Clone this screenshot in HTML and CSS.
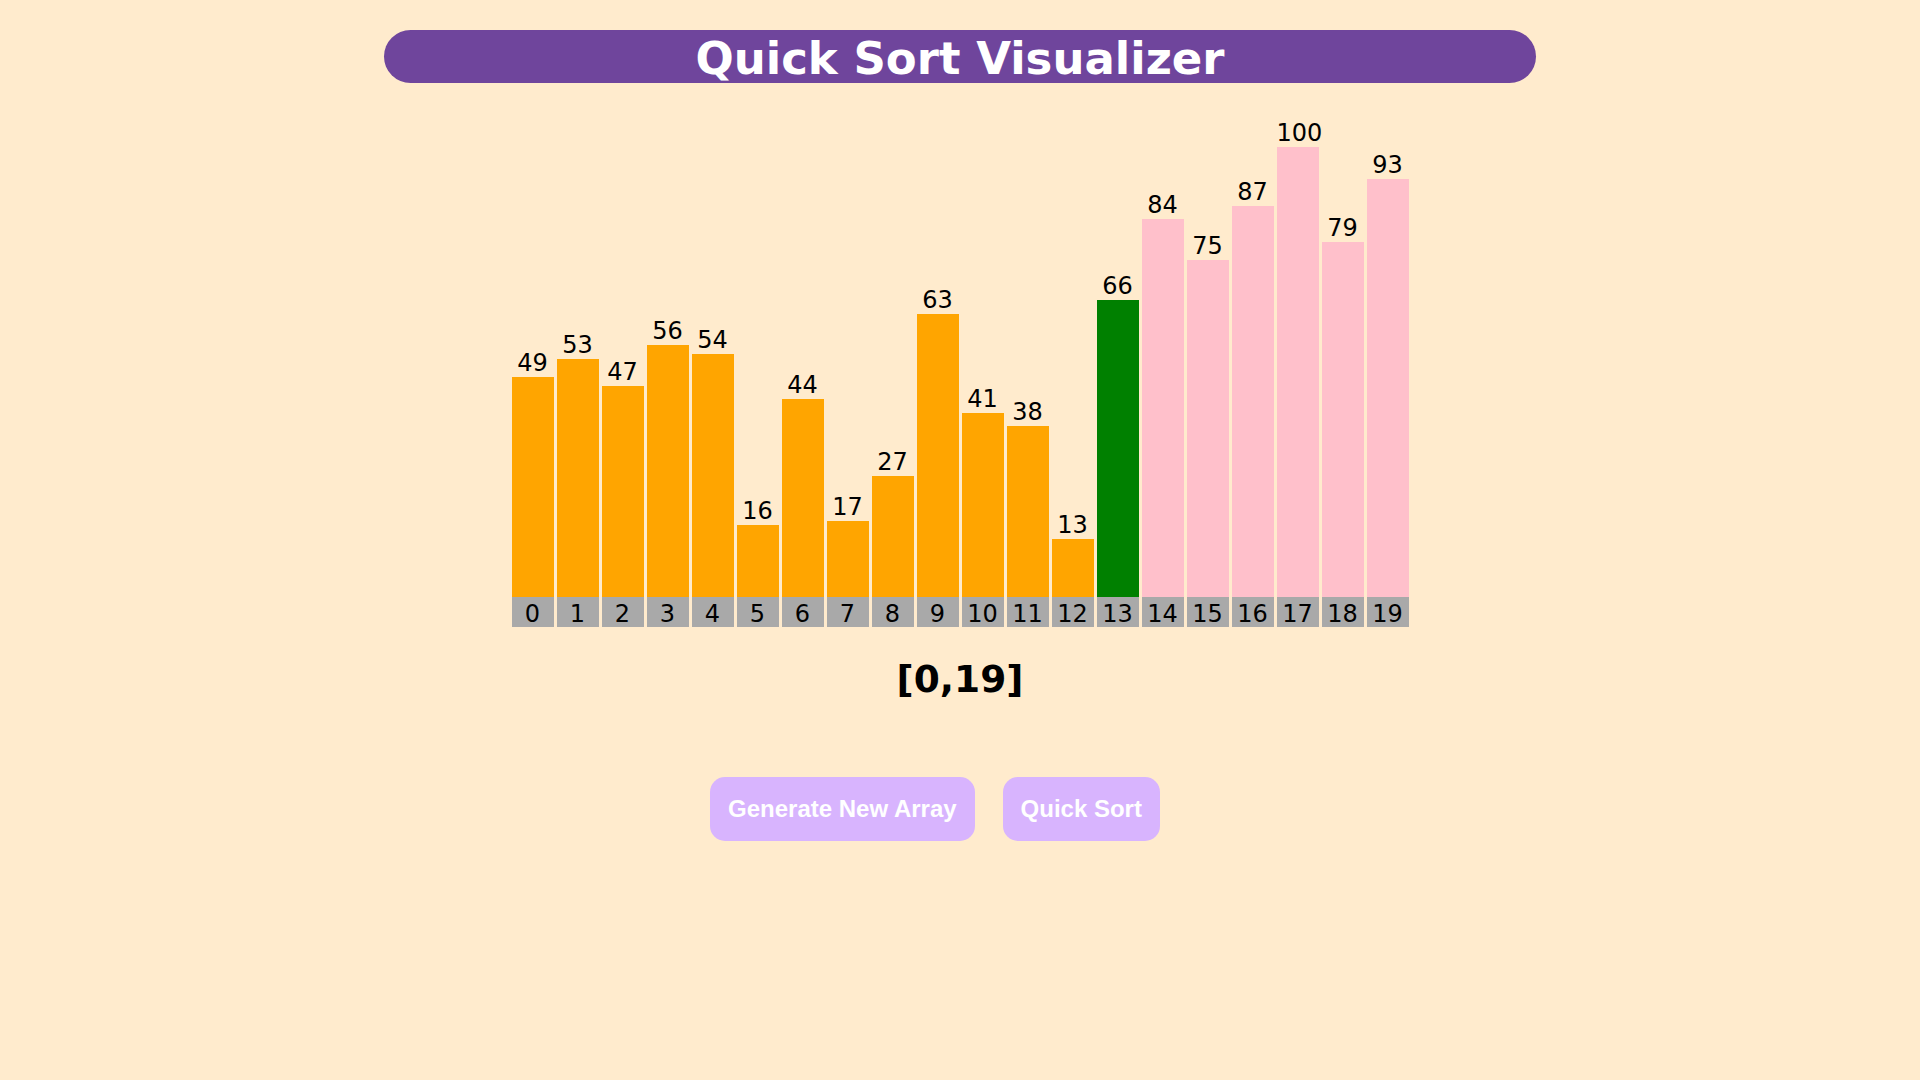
FILE: index.html
```html
<!DOCTYPE html>
<html lang="en">
<head>
<meta charset="utf-8">
<title>Quick Sort Visualizer</title>
<link rel="stylesheet" href="styles.css">
</head>
<body>
<header class="title-bar"><h1 class="title">Quick Sort Visualizer</h1></header>
<main class="chart">
  <div class="col"><span class="value">49</span><div class="bar bar-left" style="height:220.5px"></div><span class="index">0</span></div>
  <div class="col"><span class="value">53</span><div class="bar bar-left" style="height:238.5px"></div><span class="index">1</span></div>
  <div class="col"><span class="value">47</span><div class="bar bar-left" style="height:211.5px"></div><span class="index">2</span></div>
  <div class="col"><span class="value">56</span><div class="bar bar-left" style="height:252px"></div><span class="index">3</span></div>
  <div class="col"><span class="value">54</span><div class="bar bar-left" style="height:243px"></div><span class="index">4</span></div>
  <div class="col"><span class="value">16</span><div class="bar bar-left" style="height:72px"></div><span class="index">5</span></div>
  <div class="col"><span class="value">44</span><div class="bar bar-left" style="height:198px"></div><span class="index">6</span></div>
  <div class="col"><span class="value">17</span><div class="bar bar-left" style="height:76.5px"></div><span class="index">7</span></div>
  <div class="col"><span class="value">27</span><div class="bar bar-left" style="height:121.5px"></div><span class="index">8</span></div>
  <div class="col"><span class="value">63</span><div class="bar bar-left" style="height:283.5px"></div><span class="index">9</span></div>
  <div class="col"><span class="value">41</span><div class="bar bar-left" style="height:184.5px"></div><span class="index">10</span></div>
  <div class="col"><span class="value">38</span><div class="bar bar-left" style="height:171px"></div><span class="index">11</span></div>
  <div class="col"><span class="value">13</span><div class="bar bar-left" style="height:58.5px"></div><span class="index">12</span></div>
  <div class="col"><span class="value">66</span><div class="bar bar-pivot" style="height:297px"></div><span class="index">13</span></div>
  <div class="col"><span class="value">84</span><div class="bar bar-right" style="height:378px"></div><span class="index">14</span></div>
  <div class="col"><span class="value">75</span><div class="bar bar-right" style="height:337.5px"></div><span class="index">15</span></div>
  <div class="col"><span class="value">87</span><div class="bar bar-right" style="height:391.5px"></div><span class="index">16</span></div>
  <div class="col"><span class="value">100</span><div class="bar bar-right" style="height:450px"></div><span class="index">17</span></div>
  <div class="col"><span class="value">79</span><div class="bar bar-right" style="height:355.5px"></div><span class="index">18</span></div>
  <div class="col"><span class="value">93</span><div class="bar bar-right" style="height:418.5px"></div><span class="index">19</span></div>
</main>
<p class="range">[0,19]</p>
<div class="controls">
  <button class="btn" type="button">Generate New Array</button>
  <button class="btn" type="button">Quick Sort</button>
</div>
</body>
</html>
```
FILE: styles.css
```css
html, body {
  margin: 0;
  padding: 0;
}

body {
  background: #ffebcd;
  font-family: "DejaVu Sans", Verdana, sans-serif;
  color: #000;
  padding-top: 30px;
}

.title-bar {
  width: 1152px;
  height: 53px;
  margin: 0 auto;
  background: #6f459c;
  border-radius: 27px;
  box-sizing: border-box;
  padding-top: 5px;
}

.title {
  margin: 0;
  font-family: "DejaVu Sans", Verdana, sans-serif;
  font-weight: bold;
  font-size: 45px;
  line-height: 48px;
  color: #fff;
  text-align: center;
}

.chart {
  display: flex;
  justify-content: center;
  align-items: flex-end;
  gap: 3px;
  height: 520px;
  margin-top: 24px;
}

.col {
  display: flex;
  flex-direction: column;
  align-items: stretch;
  width: 42px;
}

.value {
  display: block;
  font-size: 24px;
  line-height: normal;
  text-align: center;
  white-space: nowrap;
}

.bar {
  width: 42px;
}

.bar-left { background: #ffa500; }
.bar-pivot { background: #008000; }
.bar-right { background: #ffc0cb; }

.index {
  display: block;
  height: 30px;
  box-sizing: border-box;
  padding-top: 4px;
  background: #a9a9a9;
  font-size: 24px;
  line-height: 26px;
  text-align: center;
}

.range {
  margin: 30px 0 0;
  font-family: "DejaVu Sans", Verdana, sans-serif;
  font-weight: bold;
  font-size: 37.5px;
  line-height: normal;
  text-align: center;
}

.controls {
  display: flex;
  justify-content: center;
  gap: 28px;
  margin-top: 76px;
  padding-right: 50px;
}

.btn {
  font-family: "Liberation Sans", Arial, sans-serif;
  font-weight: bold;
  font-size: 24px;
  line-height: normal;
  color: #fff;
  background: #d8b4fe;
  border: none;
  border-radius: 15px;
  padding: 18px 18px;
  cursor: pointer;
}
```
